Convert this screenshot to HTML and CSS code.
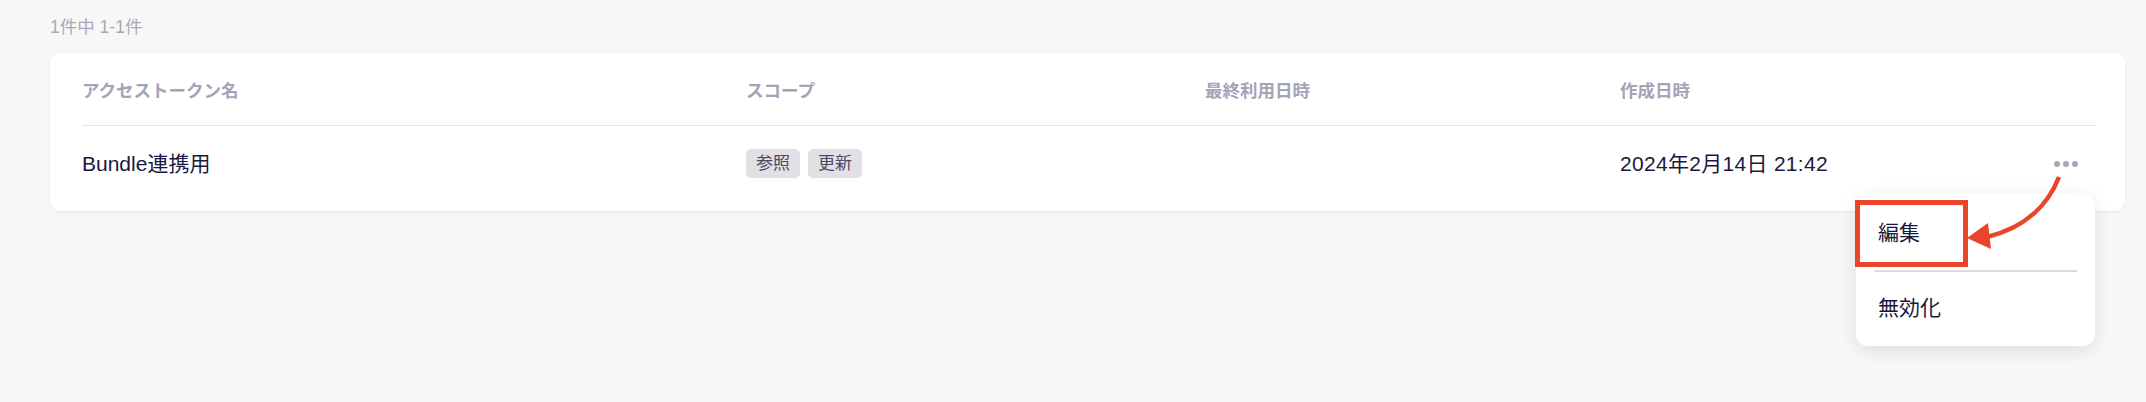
FILE: index.html
```html
<!DOCTYPE html>
<html>
<head>
	<title>アクセストークン</title>
	<link rel="stylesheet" href="styles.css">
</head>
<body>
	<div class="page">
		<div class="count">1件中 1-1件</div>
		<div class="card">
			<div class="grid head">
				<div>アクセストークン名</div>
				<div>スコープ</div>
				<div>最終利用日時</div>
				<div>作成日時</div>
				<div></div>
			</div>
			<div class="grid row">
				<div>Bundle連携用</div>
				<div class="tags">
					<span class="tag">参照</span>
					<span class="tag">更新</span>
				</div>
				<div></div>
				<div class="date">2024年2月14日 21:42</div>
				<div class="actions">
					<span class="dots"><i></i><i></i><i></i></span>
				</div>
			</div>

			<div class="menu">
				<div class="item">編集</div>
				<div class="sep"></div>
				<div class="item">無効化</div>

				<!-- annotation -->
				<div class="mark"></div>
				<svg class="arrow" width="120" height="90" viewBox="1950 170 120 90">
					<path d="M2059 177 C2048 205 2025 228 1987 237" fill="none" stroke="#e8452c" stroke-width="4.5"/>
					<polygon points="1967,238 1988,223 1991,249" fill="#e8452c"/>
				</svg>
			</div>
		</div>
	</div>
</body>
</html>
```

FILE: styles.css
```css
body {
  margin: 0;
  background-color: #f7f7f8;
  font-family: "Liberation Sans", "Noto Sans CJK JP", sans-serif;
  color: #1b1742;
}

.page {
  padding: 15px 21px 0 50px;
  height: 387px;
}

.count {
  font-size: 17.5px;
  line-height: 24px;
  color: #aaa7b9;
  margin-bottom: 14px;
}

.card {
  position: relative;
  background-color: #fff;
  border-radius: 11px;
  box-shadow: 0 1px 3px rgba(0, 0, 0, 0.07);
  padding: 0 30px 0 32px;
  height: 158px;
  box-sizing: border-box;
}

.grid {
  display: grid;
  grid-template-columns: 664px 459px 415px 1fr 60px;
  align-items: center;
}

.head {
  font-size: 17.5px;
  font-weight: 700;
  line-height: 24px;
  color: #a6a2b8;
  padding: 26px 0 22px;
  border-bottom: 1px solid #e4e2ea;
}

.row {
  font-size: 21px;
  line-height: 29px;
  padding-top: 23px;
}

.date {
  letter-spacing: 0.3px;
}

.tags {
  display: flex;
  gap: 8px;
}

.tag {
  background-color: #e1e0e4;
  color: #4d4868;
  font-size: 17px;
  line-height: 29px;
  padding: 0 10px;
  border-radius: 5px;
}

.actions {
  display: flex;
  justify-content: flex-end;
  padding-right: 17px;
}

.dots {
  display: flex;
  gap: 3px;
}

.dots i {
  width: 6px;
  height: 6px;
  border-radius: 50%;
  background-color: #aaa7b9;
}

.menu {
  position: absolute;
  right: 30px;
  top: 140px;
  width: 239px;
  background-color: #fff;
  border-radius: 12px;
  box-shadow: 0 5px 18px rgba(0, 0, 0, 0.1);
  padding: 8px 0 6px;
  z-index: 2;
}

.item {
  height: 64px;
  line-height: 64px;
  padding: 0 22px;
  font-size: 21px;
}

.sep {
  height: 2px;
  background-color: #dadada;
  margin: 5px 18px 4px;
}

.mark {
  position: absolute;
  left: -1px;
  top: 7px;
  width: 113px;
  height: 67px;
  box-sizing: border-box;
  border: 5px solid #e8452c;
}

.arrow {
  position: absolute;
  left: 94px;
  top: -23px;
  overflow: visible;
}
```
